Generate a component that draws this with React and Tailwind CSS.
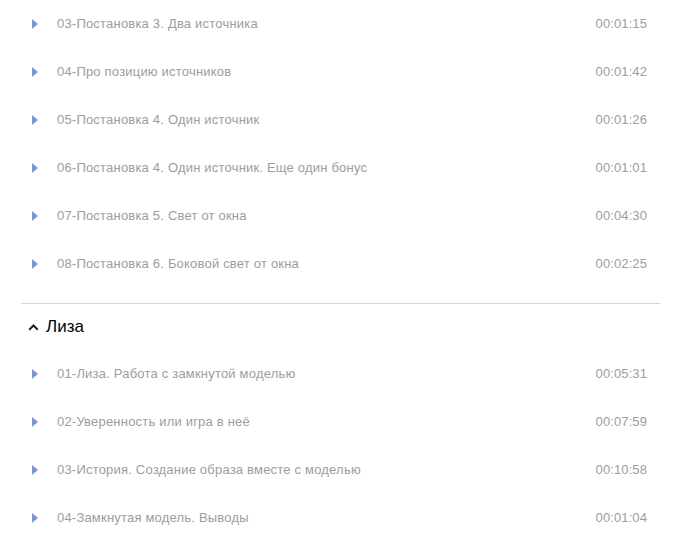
import React from "react";

const group1 = [
  ["03-Постановка 3. Два источника", "00:01:15"],
  ["04-Про позицию источников", "00:01:42"],
  ["05-Постановка 4. Один источник", "00:01:26"],
  ["06-Постановка 4. Один источник. Еще один бонус", "00:01:01"],
  ["07-Постановка 5. Свет от окна", "00:04:30"],
  ["08-Постановка 6. Боковой свет от окна", "00:02:25"],
];
const group2 = [
  ["01-Лиза. Работа с замкнутой моделью", "00:05:31"],
  ["02-Уверенность или игра в неё", "00:07:59"],
  ["03-История. Создание образа вместе с моделью", "00:10:58"],
  ["04-Замкнутая модель. Выводы", "00:01:04"],
];

function Row({ title, time }) {
  return (
    <div className="flex h-12 items-center pr-[13px]">
      <div className="flex w-9 shrink-0 justify-start pl-[11px]">
        <svg width="6" height="10" viewBox="0 0 6 10">
          <path d="M0 0 L6 5 L0 10 Z" fill="#7a95d9" />
        </svg>
      </div>
      <div className="flex-1 text-[13px] tracking-[0.2px] text-[#9d9d9d]">{title}</div>
      <div className="text-[13px] tracking-[0.1px] text-[#9d9d9d]">{time}</div>
    </div>
  );
}

export default function App() {
  return (
    <div
      className="min-h-[551px] bg-white pl-[21px] pr-[14px]"
      style={{ fontFamily: '"Liberation Sans", Arial, sans-serif' }}
    >
      <div>
        {group1.map(([t, d]) => (
          <Row key={t} title={t} time={d} />
        ))}
      </div>
      <div className="mt-[15px] border-t border-[#d6d6d6]" />
      <div className="flex h-[46px] items-center gap-[7px] pl-[7px]">
        <svg width="11" height="8" viewBox="0 0 11 8">
          <path d="M1.2 6.8 L5.5 2.5 L9.8 6.8" fill="none" stroke="#222" strokeWidth="2" />
        </svg>
        <span className="text-[17px] text-black">Лиза</span>
      </div>
      <div>
        {group2.map(([t, d]) => (
          <Row key={t} title={t} time={d} />
        ))}
      </div>
    </div>
  );
}
